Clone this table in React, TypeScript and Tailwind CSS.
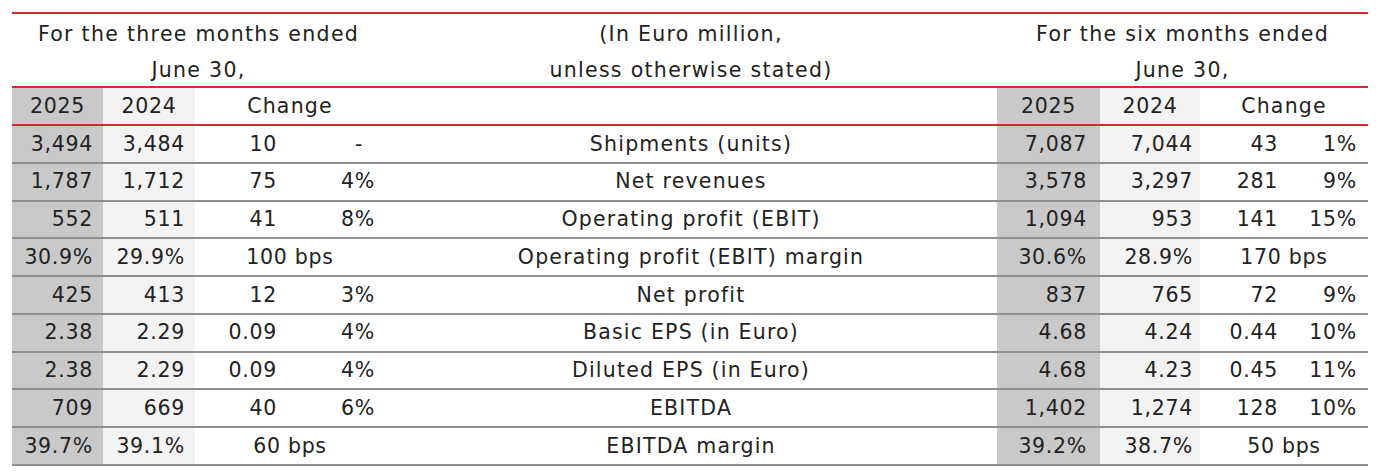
import React from "react";

type Row = {
  label: string;
  l: [string, string, string, string];
  r: [string, string, string, string];
};

const rows: Row[] = [
  { label: "Shipments (units)", l: ["3,494", "3,484", "10", "-"], r: ["7,087", "7,044", "43", "1%"] },
  { label: "Net revenues", l: ["1,787", "1,712", "75", "4%"], r: ["3,578", "3,297", "281", "9%"] },
  { label: "Operating profit (EBIT)", l: ["552", "511", "41", "8%"], r: ["1,094", "953", "141", "15%"] },
  { label: "Operating profit (EBIT) margin", l: ["30.9%", "29.9%", "100 bps", ""], r: ["30.6%", "28.9%", "170 bps", ""] },
  { label: "Net profit", l: ["425", "413", "12", "3%"], r: ["837", "765", "72", "9%"] },
  { label: "Basic EPS (in Euro)", l: ["2.38", "2.29", "0.09", "4%"], r: ["4.68", "4.24", "0.44", "10%"] },
  { label: "Diluted EPS (in Euro)", l: ["2.38", "2.29", "0.09", "4%"], r: ["4.68", "4.23", "0.45", "11%"] },
  { label: "EBITDA", l: ["709", "669", "40", "6%"], r: ["1,402", "1,274", "128", "10%"] },
  { label: "EBITDA margin", l: ["39.7%", "39.1%", "60 bps", ""], r: ["39.2%", "38.7%", "50 bps", ""] },
];

const font = { fontFamily: "'DejaVu Sans', sans-serif" };

export default function App() {
  return (
    <div className="w-[1380px] h-[476px] bg-white text-[#222222] text-[20.5px] tracking-[0.7px]" style={font}>
      <div className="pt-[12px] pl-[12px]">
        <div className="w-[1356px] border-t-2 border-[#d8282a]">
          {/* Title rows */}
          <div className="flex h-[72px] pt-[2px] leading-[36px] tracking-[1.3px]">
            <div className="w-[373px] text-center">
              <div>For the three months ended</div>
              <div>June 30,</div>
            </div>
            <div className="w-[612px] text-center">
              <div>(In Euro million,</div>
              <div>unless otherwise stated)</div>
            </div>
            <div className="w-[371px] text-center">
              <div>For the six months ended</div>
              <div>June 30,</div>
            </div>
          </div>
          {/* Header row */}
          <div className="flex h-[40px] border-y-2 border-[#d8282a] items-stretch">
            <div className="w-[91px] bg-[#c9c9c9] flex items-center justify-center">2025</div>
            <div className="w-[92px] bg-[#f3f3f3] flex items-center justify-center">2024</div>
            <div className="w-[190px] flex items-center justify-center tracking-[1.2px]">Change</div>
            <div className="w-[612px]" />
            <div className="w-[103px] bg-[#c9c9c9] flex items-center justify-center">2025</div>
            <div className="w-[100px] bg-[#f3f3f3] flex items-center justify-center">2024</div>
            <div className="w-[168px] flex items-center justify-center tracking-[1.2px]">Change</div>
          </div>
          {/* Data rows */}
          {rows.map((r) => {
            const lBps = r.l[3] === "";
            const rBps = r.r[3] === "";
            return (
              <div key={r.label} className="flex h-[37.75px] border-b-2 border-[#8f8f8f] items-stretch">
                <div className="w-[91px] bg-[#c9c9c9] flex items-center justify-end pr-[10px]">{r.l[0]}</div>
                <div className="w-[92px] bg-[#f3f3f3] flex items-center justify-end pr-[10px]">{r.l[1]}</div>
                {lBps ? (
                  <div className="w-[190px] flex items-center justify-center">{r.l[2]}</div>
                ) : (
                  <>
                    <div className="w-[136px] flex items-center justify-end pr-[54px]">{r.l[2]}</div>
                    <div
                      className={
                        "w-[54px] flex items-center justify-end " + (r.l[3] === "-" ? "pr-[22px]" : "pr-[10px]")
                      }
                    >
                      {r.l[3]}
                    </div>
                  </>
                )}
                <div className="w-[612px] flex items-center justify-center tracking-[1.2px]">{r.label}</div>
                <div className="w-[103px] bg-[#c9c9c9] flex items-center justify-end pr-[13px]">{r.r[0]}</div>
                <div className="w-[100px] bg-[#f3f3f3] flex items-center justify-end pr-[7px]">{r.r[1]}</div>
                {rBps ? (
                  <div className="w-[168px] flex items-center justify-center">{r.r[2]}</div>
                ) : (
                  <>
                    <div className="w-[90px] flex items-center justify-end pr-[12px]">{r.r[2]}</div>
                    <div className="w-[78px] flex items-center justify-end pr-[11px]">{r.r[3]}</div>
                  </>
                )}
              </div>
            );
          })}
        </div>
      </div>
    </div>
  );
}
